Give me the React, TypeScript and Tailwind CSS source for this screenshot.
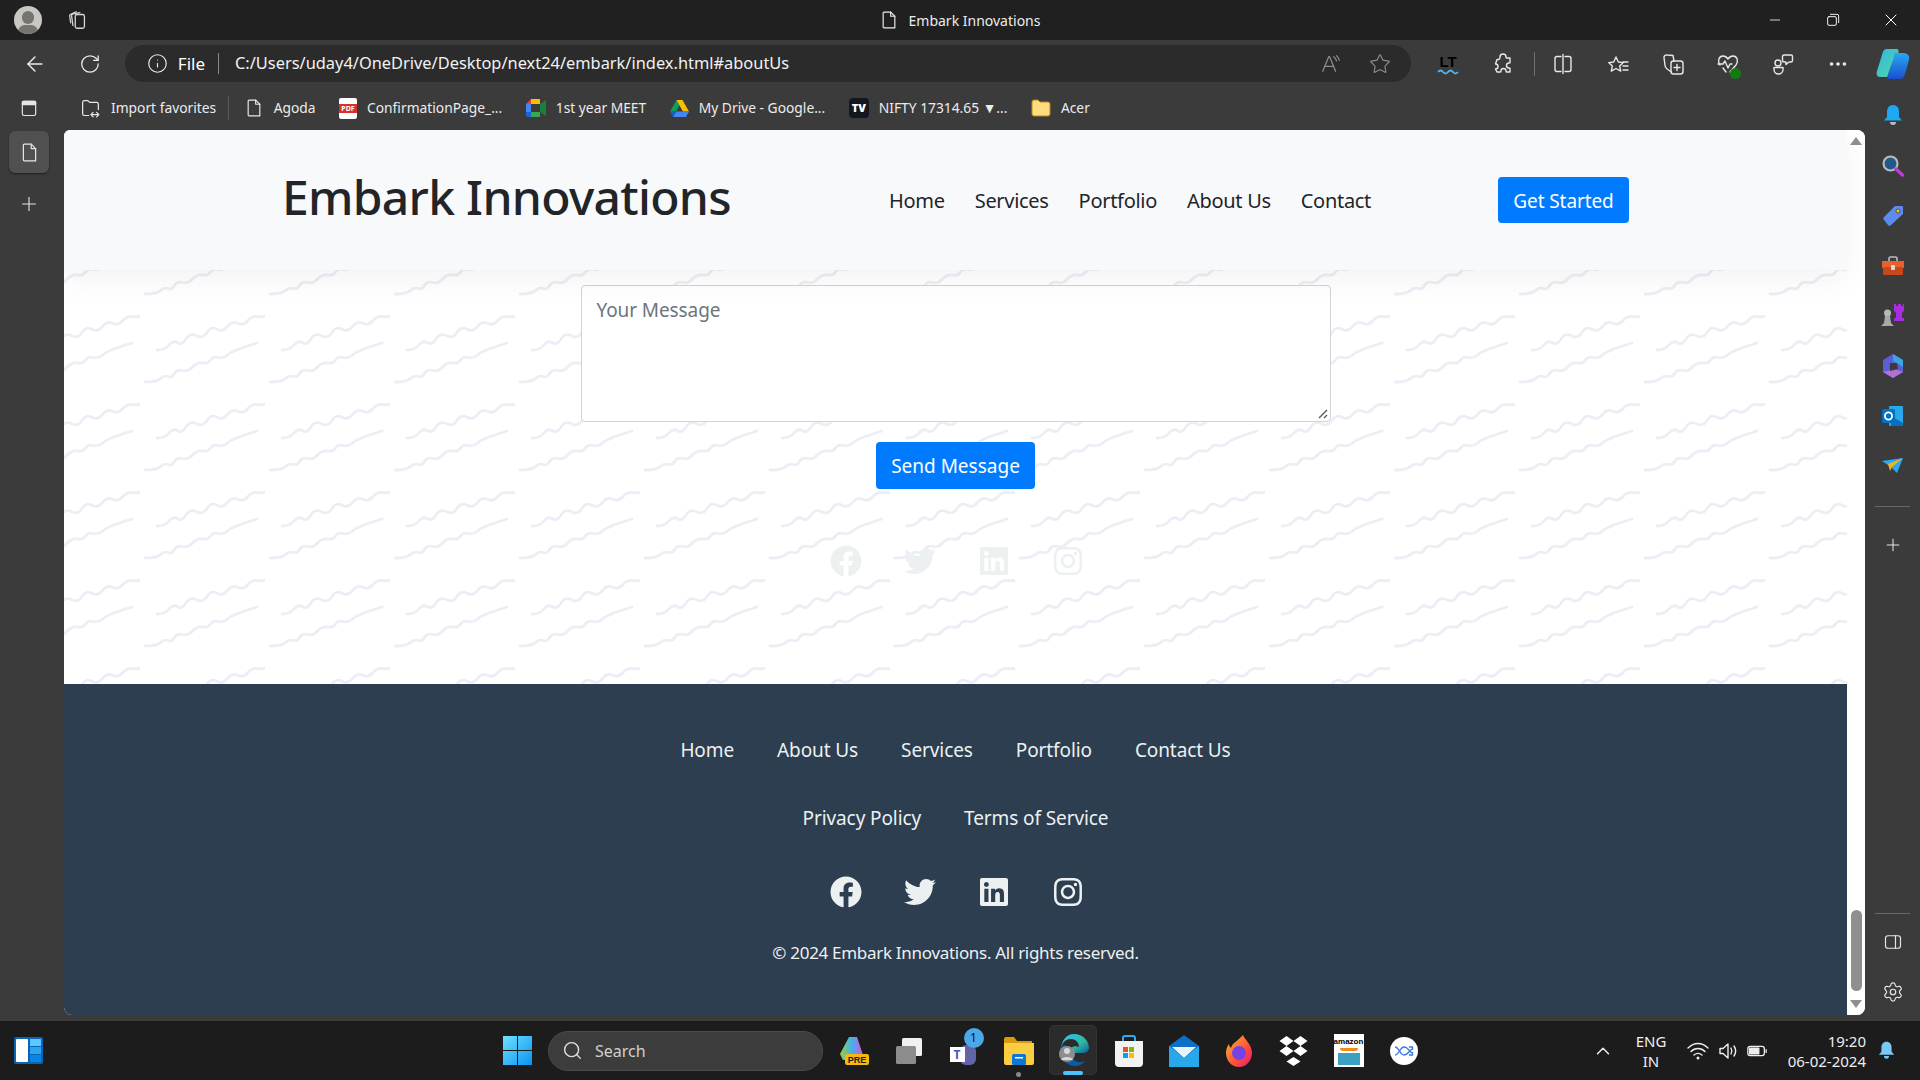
import React from "react";
import { FaFacebook, FaInstagram, FaLinkedin, FaTwitter } from "react-icons/fa";
import { ArrowLeft, ChevronUp, Ellipsis, Info, Minus, Plus, RotateCw, Search, Settings, Star, X } from "lucide-react";

const Stroke = ({ size = 24, children, className = "" }: { size?: number; children: React.ReactNode; className?: string }) => (
  <svg width={size} height={size} viewBox="0 0 24 24" fill="none" stroke="currentColor" strokeWidth={1.4} strokeLinecap="round" strokeLinejoin="round" className={className}>
    {children}
  </svg>
);

const PageIcon = ({ size = 22 }: { size?: number }) => (
  <Stroke size={size}>
    <path d="M6 2.500h8l5 5v14H6a1 1 0 0 1-1-1v-17a1 1 0 0 1 1-1z" />
    <path d="M14 2.500v5h5" />
  </Stroke>
);

// smooth line through the points of one squiggle
const smooth = (pts: number[][]) => {
  let d = `M${pts[0][0]} ${pts[0][1]}`;
  for (let i = 1; i < pts.length - 1; i++) {
    const mx = (pts[i][0] + pts[i + 1][0]) / 2;
    const my = (pts[i][1] + pts[i + 1][1]) / 2;
    d += `Q${pts[i][0]} ${pts[i][1]} ${mx} ${my}`;
  }
  const last = pts[pts.length - 1];
  return d + `L${last[0]} ${last[1]}`;
};

const wave1 = [[17, 45], [25, 45], [33, 35], [42, 40.5], [50, 27.5], [63, 34], [71, 21], [83, 27.5], [92, 15.5], [103, 21], [112, 11], [122, 12], [128, 11]];
const wave2 = [[5, 77], [17, 77], [24, 70], [32, 73], [37, 64], [48, 67], [57, 57], [68, 59], [73, 51], [83, 54], [92, 46], [117, 38]];

const Wave = () => (
  <svg className="absolute inset-0 w-full h-full" xmlns="http://www.w3.org/2000/svg">
    <defs>
      <pattern id="waves" width="125" height="88" patternUnits="userSpaceOnUse" patternTransform="translate(76 35)">
        <path d={smooth(wave1)} fill="none" stroke="#eeedf5" strokeWidth="2.800" strokeLinecap="round" />
        <path d={smooth(wave2)} fill="none" stroke="#eeedf5" strokeWidth="2.800" strokeLinecap="round" />
      </pattern>
    </defs>
    <rect width="100%" height="100%" fill="url(#waves)" />
  </svg>
);

const SocialIcons = ({ color }: { color: string }) => (
  <div className={`flex items-center gap-[42px] ml-[3px] text-[32px] ${color}`}>
    <FaFacebook />
    <FaTwitter />
    <FaLinkedin />
    <FaInstagram />
  </div>
);

const TitleBar = () => (
  <div className="h-[40px] bg-[#202020] flex items-center text-white shrink-0">
    <div className="ml-[14px] w-[28px] h-[28px] rounded-full bg-[#c9c7c4] overflow-hidden relative">
      <div className="absolute left-[8px] top-[5px] w-[12px] h-[13px] rounded-full bg-[#77736f]" />
      <div className="absolute left-[4px] top-[19px] w-[20px] h-[14px] rounded-full bg-[#77736f]" />
    </div>
    <div className="ml-[25px] text-[#d8d8d8]">
      <Stroke size={22}>
        <rect x="9" y="6" width="10" height="15" rx="2" />
        <path d="M6.500 18 5 7.500a2 2 0 0 1 1.700-2.200L14 4" />
        <path d="M4 15 3 8a2 2 0 0 1 1.500-2.500L10 3" />
      </Stroke>
    </div>
    <div className="flex-1 flex items-center justify-center gap-[10px] text-[14px] text-[#ececec] pl-[84px]">
      <PageIcon size={20} />
      <span>Embark Innovations</span>
    </div>
    <div className="flex items-center">
      <div className="w-[58px] flex justify-center"><Minus size={16} strokeWidth={1.2} /></div>
      <div className="w-[58px] flex justify-center">
        <Stroke size={16}>
          <rect x="4" y="7" width="13" height="13" rx="2" />
          <path d="M8 3.500h10a2.500 2.500 0 0 1 2.500 2.500v10" />
        </Stroke>
      </div>
      <div className="w-[58px] flex justify-center"><X size={20} strokeWidth={1.2} /></div>
    </div>
  </div>
);

const ToolCell = ({ children }: { children: React.ReactNode }) => (
  <div className="w-[55px] flex justify-center items-center text-[#e8e8e8]">{children}</div>
);

const Toolbar = () => (
  <div className="h-[46px] bg-[#3b3b3b] flex items-center text-white shrink-0 pt-[1px]">
    <ArrowLeft size={24} strokeWidth={1.4} className="ml-[23px] text-[#ececec]" />
    <RotateCw size={22} strokeWidth={1.4} className="ml-[32px] text-[#ececec]" />
    <div className="ml-[24px] w-[1291px] h-[37px] rounded-full bg-[#2b2b2b] flex items-center">
      <Info size={21} strokeWidth={1.3} className="ml-[22px] text-[#eee]" />
      <span className="ml-[10px] text-[17px]">File</span>
      <div className="ml-[13px] w-px h-[21px] bg-[#8a8a8a]" />
      <span className="ml-[16px] text-[16.4px] text-[#f2f2f2] flex-1">C:/Users/uday4/OneDrive/Desktop/next24/embark/index.html#aboutUs</span>
      <div className="text-[#8b8b8b] mr-[27px]">
        <Stroke size={22}>
          <path d="M3 20 9.500 4h1L17 20M5.500 14.500h9.500" />
          <path d="M15 4c1.500 1 2.500 2.500 3 4.500M18 3c1.500 1 2.500 3 3 5" />
        </Stroke>
      </div>
      <Star size={22} strokeWidth={1.3} className="text-[#8b8b8b] mr-[20px]" />
    </div>
    <div className="ml-[9px] flex items-center">
      <ToolCell>
        <svg width="24" height="24" viewBox="0 0 24 24">
          <text x="12" y="15" textAnchor="middle" fontSize="15" fontWeight="700" fill="#000" fontFamily="Liberation Sans, sans-serif">LT</text>
          <path d="M2 20q2.500-3 5 0t5 0 5 0 5 0" fill="none" stroke="#5ab4f5" strokeWidth="1.800" />
        </svg>
      </ToolCell>
      <ToolCell>
        <Stroke size={24}>
          <path d="M9 5a3 3 0 0 1 6 0c0 .6 0 1 .5 1H19v4.500c0 .5-.6.500-1 .5a2.500 2.500 0 0 0 0 5c.5 0 1 0 1 .5V20h-3.500c-.5 0-.5-.6-.5-1a2.500 2.500 0 0 0-5 0c0 .4 0 1-.5 1H6l-1.500-3c1.500 0 2.500-1 2.500-2.500S6 12 4.500 12L6 7.500c1 0 3 .500 3-2.500z" />
        </Stroke>
      </ToolCell>
      <div className="ml-[4px] w-px h-[24px] bg-[#707070]" />
      <ToolCell>
        <Stroke size={24}>
          <path d="M10 4.500H6a2 2 0 0 0-2 2v11a2 2 0 0 0 2 2h4M14 4.500h4a2 2 0 0 1 2 2v11a2 2 0 0 1-2 2h-4M12 2.500v19" />
        </Stroke>
      </ToolCell>
      <ToolCell>
        <Stroke size={24}>
          <path d="m10 3 2.300 5 5 .6-3.600 3.500 1 5-4.700-2.600-4.700 2.600 1-5L2.700 8.600l5-.6z" transform="translate(0 2)" />
          <path d="M17 10h5M17 14h5M17 18h5" />
        </Stroke>
      </ToolCell>
      <ToolCell>
        <Stroke size={24}>
          <rect x="10" y="9" width="12" height="13" rx="2.500" />
          <path d="M16 12.500v6M13 15.500h6" />
          <path d="M13 9 12 3.500 6 3a2.500 2.500 0 0 0-3 2.500l1 8c.3 2 2 4 6 6" />
        </Stroke>
      </ToolCell>
      <ToolCell>
        <div className="relative">
          <Stroke size={24}>
            <path d="M4 13C1 9 3 4 7 4c2 0 4 1.500 5 3 1-1.500 3-3 5-3 4 0 6 5 3 9l-6 7" />
            <path d="M2 12h5l2-3 3 7 2-4h2" />
            <path d="m7 16 3 4" />
          </Stroke>
          <div className="absolute right-[-1px] bottom-[-3px] w-[11px] h-[11px] rounded-full bg-[#107c10]" />
        </div>
      </ToolCell>
      <ToolCell>
        <Stroke size={24}>
          <circle cx="7" cy="11" r="3" />
          <path d="M13 3h7a1.500 1.500 0 0 1 1.500 1.500v4a1.500 1.500 0 0 1-1.500 1.500h-2l-3 2.500V10h-2a1.500 1.500 0 0 1-1.500-1.500v-4A1.500 1.500 0 0 1 13 3z" />
          <path d="M3 15.500h9v2a4.500 4.500 0 0 1-9 0z" />
        </Stroke>
      </ToolCell>
      <ToolCell><Ellipsis size={22} /></ToolCell>
      <ToolCell>
        <svg width="34" height="34" viewBox="0 0 34 34">
          <defs>
            <linearGradient id="cpA" x1="0" y1="0" x2="1" y2="1"><stop offset="0" stopColor="#2fb7e6" /><stop offset="1" stopColor="#56d89a" /></linearGradient>
            <linearGradient id="cpB" x1="0" y1="0" x2="0" y2="1"><stop offset="0" stopColor="#2aa8f0" /><stop offset="1" stopColor="#1a4fd0" /></linearGradient>
          </defs>
          <path d="M11 2h9c3 0 3 2 2 5l-7 20c-1 2-2 3-5 3H4c-3 0-4-3-3-6L6 8c1-4 2-6 5-6z" fill="url(#cpA)" />
          <path d="M18 6h9c5 0 7 3 6 7l-4 14c-1 4-3 5-6 5h-9c-3 0-3-2-2-5l6-17c1-3 0-4 0-4z" fill="url(#cpB)" />
        </svg>
      </ToolCell>
    </div>
  </div>
);

const Bookmark = ({ icon, label }: { icon: React.ReactNode; label: string }) => (
  <div className="flex items-center gap-[10px]">
    {icon}
    <span className="text-[13.8px] text-[#ececec] whitespace-nowrap">{label}</span>
  </div>
);

const Bookmarks = () => (
  <div className="h-[44px] flex items-center pl-[16px] gap-[23.5px] shrink-0 text-[#e8e8e8]">
    <div className="flex items-center gap-[21px]">
      <Bookmark
        label="Import favorites"
        icon={
          <Stroke size={21}>
            <path d="M10 20H5a2 2 0 0 1-2-2V5a2 2 0 0 1 2-2h4l2 2h8a2 2 0 0 1 2 2v6" />
            <path d="M13 19h8M15 16.500 12.500 19l2.500 2.500M19 16.500l2.500 2.500-2.500 2.500" />
          </Stroke>
        }
      />
      <div className="w-px h-[24px] bg-[#5a5a5a] -mx-[9px]" />
    </div>
    <Bookmark label="Agoda" icon={<PageIcon size={20} />} />
    <Bookmark
      label="ConfirmationPage_..."
      icon={
        <div className="w-[18px] h-[21px] bg-white rounded-[2px] flex items-center justify-center relative">
          <div className="w-[18px] h-[9px] bg-[#d9302c] text-white text-[7px] font-bold leading-[9px] text-center">PDF</div>
        </div>
      }
    />
    <Bookmark
      label="1st year MEET"
      icon={
        <svg width="20" height="18" viewBox="0 0 20 18">
          <path d="M0 5 5 0v5z" fill="#ea4335" />
          <path d="M5 0h9v5H5z" fill="#fbbc04" />
          <path d="M0 5h5v8H0z" fill="#4285f4" />
          <path d="M0 13h5v5H2a2 2 0 0 1-2-2z" fill="#1967d2" />
          <path d="M5 13h9v5H5z" fill="#34a853" />
          <path d="M14 5v8l6 4V1z" fill="#188038" />
        </svg>
      }
    />
    <Bookmark
      label="My Drive - Google..."
      icon={
        <svg width="19" height="17" viewBox="0 0 19 17">
          <path d="M6.500 0h6L6 11.500H0z" fill="#0f9d58" />
          <path d="M12.500 0 19 11.500h-6L6.500 0z" fill="#fbbc04" />
          <path d="M3 17 6 11.500h13L16 17z" fill="#4285f4" />
          <path d="M0 11.500h6L3 17z" fill="#0b66c2" />
        </svg>
      }
    />
    <Bookmark
      label="NIFTY 17314.65 ▼..."
      icon={
        <div className="w-[20px] h-[20px] rounded-[4px] bg-[#131722] text-white text-[11px] font-black leading-[20px] text-center">TV</div>
      }
    />
    <Bookmark
      label="Acer"
      icon={
        <svg width="20" height="18" viewBox="0 0 20 18">
          <path d="M1 3a2 2 0 0 1 2-2h4l2 2h8a2 2 0 0 1 2 2v10a2 2 0 0 1-2 2H3a2 2 0 0 1-2-2z" fill="#ffdc7d" stroke="#b58a1e" />
        </svg>
      }
    />
  </div>
);

const SideIcon = ({ children }: { children: React.ReactNode }) => (
  <div className="h-[50px] flex items-center justify-center">{children}</div>
);

const RightSidebar = () => (
  <div className="w-[55px] shrink-0 flex flex-col text-[#e8e8e8] pt-[5px]">
    <SideIcon>
      <svg width="20" height="22" viewBox="0 0 20 22">
        <path d="M10 0c4 0 6 3 6 7v5l3 3.500H1L4 12V7c0-4 2-7 6-7z" fill="#1ea7f2" />
        <path d="M7 17h6c0 2-1 3-3 3s-3-1-3-3z" fill="#bbb" />
      </svg>
    </SideIcon>
    <SideIcon>
      <svg width="22" height="22" viewBox="0 0 22 22">
        <circle cx="8.500" cy="8.500" r="7" fill="#215a8a" stroke="#b9b9b9" strokeWidth="2.200" />
        <path d="m14 14 6.500 6" stroke="#c239d8" strokeWidth="3.400" strokeLinecap="round" />
      </svg>
    </SideIcon>
    <SideIcon>
      <svg width="22" height="22" viewBox="0 0 22 22">
        <path d="M13 1h7a1 1 0 0 1 1 1v7L9 20a2 2 0 0 1-3 0L2 15a2 2 0 0 1 0-3z" fill="#5d8af0" />
        <circle cx="16" cy="6" r="2" fill="#f5c518" stroke="#222" strokeWidth=".6" />
      </svg>
    </SideIcon>
    <SideIcon>
      <svg width="24" height="20" viewBox="0 0 24 20">
        <path d="M8 5V2.500A1.500 1.500 0 0 1 9.500 1h5A1.500 1.500 0 0 1 16 2.500V5" fill="none" stroke="#bbb" strokeWidth="1.600" />
        <rect x="1" y="5" width="22" height="7" fill="#e8602c" />
        <rect x="2" y="11" width="20" height="8" rx="1" fill="#c8481c" />
        <rect x="10" y="9" width="4" height="5" rx="1" fill="#d8d8d8" />
      </svg>
    </SideIcon>
    <SideIcon>
      <svg width="24" height="24" viewBox="0 0 24 24">
        <path d="M13 1h2v2h2V1h3v2h2V1h1v7l-2 2v5h2v3H13v-3h2v-5l-2-2z" fill="#a52fe0" transform="translate(0 -1)" />
        <circle cx="6.500" cy="9" r="3.500" fill="#b8b8b8" />
        <path d="M4 12h5l1 7 3 3H0l3-3z" fill="#a8a8a8" />
      </svg>
    </SideIcon>
    <SideIcon>
      <svg width="22" height="24" viewBox="0 0 22 24">
        <path d="M11 0 21 6v12l-10 6L1 18V6z" fill="#5b5fd6" />
        <path d="M11 0 21 6v7l-6-4-4-2z" fill="#3aa6e0" />
        <path d="M1 18l10 6 10-6-8-3-4 1z" fill="#b070d8" />
        <path d="M8 9l7 0 1 6-8 2z" fill="#3b3b3b" />
      </svg>
    </SideIcon>
    <SideIcon>
      <svg width="22" height="22" viewBox="0 0 22 22">
        <rect x="7" y="1" width="14" height="20" rx="1" fill="#28a8ea" />
        <path d="M9 11 21 18v2a1 1 0 0 1-1 1H9z" fill="#0a6dc2" />
        <rect x="0" y="4" width="13" height="14" rx="1.500" fill="#0072c6" />
        <circle cx="6.500" cy="11" r="3.600" fill="none" stroke="#fff" strokeWidth="1.800" />
      </svg>
    </SideIcon>
    <SideIcon>
      <svg width="22" height="16" viewBox="0 0 22 16">
        <path d="M0 3 21 0 15 15 9 9z" fill="#2ba8f2" />
        <path d="M21 0 6 6l2 7 2-4z" fill="#f5b21c" />
      </svg>
    </SideIcon>
    <div className="mx-[10px] my-[15px] h-px bg-[#686868]" />
    <div className="flex justify-center pt-[13px]"><Plus size={20} strokeWidth={1.2} /></div>
    <div className="flex-1" />
    <div className="mx-[10px] h-px bg-[#686868]" />
    <div className="h-[56px] flex items-center justify-center">
      <Stroke size={20}>
        <rect x="3" y="4.500" width="18" height="15" rx="3" />
        <path d="M15 4.500v15" />
      </Stroke>
    </div>
    <div className="h-[44px] flex items-center justify-center"><Settings size={22} strokeWidth={1.3} /></div>
    <div className="h-[7px]" />
  </div>
);

const LeftSidebar = () => (
  <div className="w-[64px] shrink-0 flex flex-col items-center text-[#e6e6e6]">
    <div className="h-[44px] flex items-center justify-center pr-[6px]">
      <Stroke size={20}>
        <rect x="4" y="4" width="16" height="17" rx="2" />
        <rect x="4" y="4" width="16" height="4" rx="1" fill="currentColor" />
      </Stroke>
    </div>
    <div className="mt-[1px] ml-[-6px] w-[40px] h-[42px] rounded-[6px] bg-[#505050] flex items-center justify-center shadow-[0_1px_2px_rgba(0,0,0,0.5)]">
      <PageIcon size={21} />
    </div>
    <div className="mt-[20px] ml-[-6px]"><Plus size={22} strokeWidth={1.2} /></div>
  </div>
);

const FooterLink = ({ children }: { children: React.ReactNode }) => (
  <a className="text-[19px] tracking-[-0.1px] text-[#ecf0f1] leading-[30px]">{children}</a>
);

const Page = () => (
  <div className="h-[885px] flex bg-white rounded-[8px] rounded-tl-[6px] overflow-hidden">
    <div className="w-[1783px] flex flex-col">
      <div className="relative z-10 h-[140px] shrink-0 bg-[#f8f9fa] shadow-[0_10px_30px_rgba(0,0,0,0.05)] flex items-center">
        <span className="ml-[218px] text-[48px] font-medium tracking-[-0.7px] leading-[60px] text-[#212529] w-[607px] pb-[6px]">Embark Innovations</span>
        <nav className="flex items-center gap-[30px] text-[20px] tracking-[-0.3px] text-[#212529] mt-[2px]">
          <a>Home</a>
          <a>Services</a>
          <a>Portfolio</a>
          <a>About Us</a>
          <a>Contact</a>
        </nav>
        <button className="ml-auto mr-[218px] h-[46px] w-[131px] pt-[2px] rounded-[4px] bg-[#007bff] text-white text-[19px] tracking-[-0.1px]">Get Started</button>
      </div>
      <section className="relative h-[414px] shrink-0 bg-white flex flex-col items-center">
        <Wave />
        <div className="relative mt-[15px] w-[750px] h-[137px] border border-[#ced4da] rounded-[4px] bg-white px-[15px] pt-[10px] text-[19px] tracking-[-0.1px] text-[#6c757d]">
          Your Message
          <svg className="absolute right-[2px] bottom-[2px]" width="10" height="10" viewBox="0 0 10 10">
            <path d="M1 9 9 1M6 9l3-3" stroke="#555" strokeWidth="1.300" />
          </svg>
        </div>
        <button className="relative mt-[20px] w-[159px] h-[47px] pt-[2px] rounded-[4px] bg-[#007bff] text-white text-[19px]">Send Message</button>
        <div className="relative mt-[56px]">
          <SocialIcons color="text-[#ecf0f1]" />
        </div>
      </section>
      <footer className="flex-1 bg-[#2c3e50] text-[#ecf0f1] flex flex-col items-center pt-[51px]">
        <div className="flex gap-[43px]">
          <FooterLink>Home</FooterLink>
          <FooterLink>About Us</FooterLink>
          <FooterLink>Services</FooterLink>
          <FooterLink>Portfolio</FooterLink>
          <FooterLink>Contact Us</FooterLink>
        </div>
        <div className="flex gap-[43px] mt-[38px]">
          <FooterLink>Privacy Policy</FooterLink>
          <FooterLink>Terms of Service</FooterLink>
        </div>
        <div className="mt-[43px]">
          <SocialIcons color="text-[#ecf0f1]" />
        </div>
        <p className="mt-[31px] text-[17px] tracking-[-0.3px] leading-[27px]">© 2024 Embark Innovations. All rights reserved.</p>
      </footer>
    </div>
    <div className="w-[18px] relative bg-white flex flex-col items-center">
      <div className="mt-[7px] w-0 h-0 border-l-[6px] border-r-[6px] border-b-[8px] border-l-transparent border-r-transparent border-b-[#8f8f8f]" />
      <div className="mt-[765px] w-[11px] h-[81px] rounded-full bg-[#8f8f8f]" />
      <div className="mt-[9px] w-0 h-0 border-l-[6px] border-r-[6px] border-t-[8px] border-l-transparent border-r-transparent border-t-[#8f8f8f]" />
    </div>
  </div>
);

const TaskCell = ({ children }: { children: React.ReactNode }) => (
  <div className="w-[55px] h-full flex items-center justify-center relative">{children}</div>
);

const Taskbar = () => (
  <div className="h-[59px] bg-[#1c1c1c] flex items-center text-white shrink-0">
    <div className="ml-[14px] w-[29px] h-[27px] rounded-[2px] bg-[#0a64b4] flex gap-[2px] p-[2px]">
      <div className="w-[12px] bg-white rounded-[1px]" />
      <div className="flex-1 flex flex-col gap-[1px]">
        <div className="flex-1 bg-[#5bc8ff]" />
        <div className="h-[7px] bg-[#2aa4f4]" />
        <div className="h-[7px] bg-[#0c84e4]" />
      </div>
    </div>
    <svg className="ml-[460px]" width="29" height="29" viewBox="0 0 29 29">
      <defs>
        <linearGradient id="winG" x1="0" y1="0" x2="1" y2="1"><stop offset="0" stopColor="#6fe0ff" /><stop offset="1" stopColor="#0a94f0" /></linearGradient>
      </defs>
      <path d="M0 0h14v14H0zM15 0h14v14H15zM0 15h14v14H0zM15 15h14v14H15z" fill="url(#winG)" />
    </svg>
    <div className="ml-[16px] w-[275px] h-[40px] rounded-full bg-[#3c3c3c] border border-[#4a4a4a] flex items-center">
      <Search size={21} strokeWidth={1.6} className="ml-[13px] text-[#e0e0e0]" />
      <span className="ml-[12px] text-[16px] text-[#d0d0d0]">Search</span>
    </div>
    <div className="ml-[3px] flex items-center h-full">
      <TaskCell>
        <svg width="30" height="30" viewBox="0 0 30 30">
          <defs>
            <linearGradient id="cpP" x1="0" y1="0" x2="1" y2="0"><stop offset="0" stopColor="#9ccf3c" /><stop offset=".5" stopColor="#3fb3ee" /><stop offset="1" stopColor="#d05ad8" /></linearGradient>
          </defs>
          <path d="M10 1h8l6 18-8 0-3 5H4L1 18z" fill="url(#cpP)" />
          <rect x="6" y="18" width="24" height="11" rx="2" fill="#f5b90c" />
          <text x="18" y="27" textAnchor="middle" fontSize="9" fontWeight="700" fill="#222" fontFamily="Liberation Sans, sans-serif">PRE</text>
        </svg>
      </TaskCell>
      <TaskCell>
        <svg width="30" height="28" viewBox="0 0 30 28">
          <rect x="8" y="1" width="20" height="18" rx="1.500" fill="#f0f0f0" />
          <rect x="2" y="9" width="20" height="18" rx="1.500" fill="#8c8c8c" />
        </svg>
      </TaskCell>
      <TaskCell>
        <div className="relative w-[28px] h-[28px]">
          <div className="absolute left-[10px] top-[8px] w-[16px] h-[20px] rounded-[6px] bg-[#6264a7]" />
          <div className="absolute left-0 top-[10px] w-[15px] h-[15px] bg-white text-[#4b53bc] text-[12px] font-bold leading-[15px] text-center">T</div>
          <div className="absolute left-[14px] top-[-9px] w-[20px] h-[20px] rounded-full bg-[#4aa8e8] text-[#111] text-[12px] leading-[20px] text-center">1</div>
        </div>
      </TaskCell>
      <TaskCell>
        <svg width="30" height="28" viewBox="0 0 30 28">
          <path d="M0 2a2 2 0 0 1 2-2h8l3 4h15v6H0z" fill="#d99a0f" />
          <path d="M0 6h30v20a2 2 0 0 1-2 2H2a2 2 0 0 1-2-2z" fill="#fbcd42" />
          <rect x="8" y="17" width="14" height="11" rx="1.500" fill="#0a78d4" />
          <rect x="11" y="20" width="8" height="1.500" fill="#fff" />
        </svg>
        <div className="absolute bottom-[3px] left-[25px] w-[5px] h-[5px] rounded-full bg-[#8a8a8a]" />
      </TaskCell>
      <TaskCell>
        <div className="absolute left-[3px] top-[4px] w-[48px] h-[50px] rounded-[5px] bg-[#2b2b2b] border border-[#333]" />
        <svg className="relative mb-[2px]" width="32" height="34" viewBox="0 0 32 34">
          <defs>
            <linearGradient id="edgeG" x1="0" y1="0" x2="1" y2="1"><stop offset="0" stopColor="#35c1f1" /><stop offset=".6" stopColor="#2fb9a0" /><stop offset="1" stopColor="#0c59a4" /></linearGradient>
          </defs>
          <path d="M16 1c9 0 15 7 15 14 0 3-3 5-7 5H11c0-5 5-8 10-6 0-4-3-8-8-8C6 6 3 12 3 17c0-9 5-16 13-16z" fill="url(#edgeG)" />
          <path d="M2 16c0 10 7 17 15 17 4 0 8-2 10-5-6 3-14 0-15-8C12 12 4 9 2 16z" fill="#0c59a4" />
          <circle cx="9" cy="21" r="8" fill="#8e8e8e" />
          <circle cx="9" cy="18" r="3" fill="#d8d8d8" />
          <path d="M3 27c1-4 11-4 12 0z" fill="#d8d8d8" />
        </svg>
        <div className="absolute bottom-[5px] left-[17px] w-[20px] h-[4px] rounded-full bg-[#4cc2ff]" />
      </TaskCell>
      <TaskCell>
        <svg width="30" height="32" viewBox="0 0 30 32">
          <path d="M9 6V3a2 2 0 0 1 2-2h8a2 2 0 0 1 2 2v3" fill="none" stroke="#30a9ef" strokeWidth="2" />
          <path d="M1 6h28v22a4 4 0 0 1-4 4H5a4 4 0 0 1-4-4z" fill="#f2f2f2" />
          <path d="M9 12h5v5H9z" fill="#f25022" /><path d="M15 12h5v5h-5z" fill="#7fba00" />
          <path d="M9 18h5v5H9z" fill="#00a4ef" /><path d="M15 18h5v5h-5z" fill="#ffb900" />
        </svg>
      </TaskCell>
      <TaskCell>
        <svg width="30" height="32" viewBox="0 0 30 32">
          <path d="M15 0 30 11v21H0V11z" fill="#0f6fc6" />
          <path d="M3 12h24L15 23z" fill="#e8f4fb" />
          <path d="M0 11 15 23 30 11v21H0z" fill="#28a8ea" />
        </svg>
      </TaskCell>
      <TaskCell>
        <svg width="28" height="32" viewBox="0 0 28 32">
          <defs>
            <linearGradient id="ffG" x1="0" y1="0" x2="1" y2="1"><stop offset="0" stopColor="#ffbd2f" /><stop offset=".6" stopColor="#ff4f38" /><stop offset="1" stopColor="#e31587" /></linearGradient>
          </defs>
          <path d="M18 0c1 4 9 9 9 18 0 8-6 14-13 14S1 26 1 18c0-4 2-8 3-9 0 2 1 3 2 4 1-5 7-7 12-13z" fill="url(#ffG)" />
          <circle cx="14" cy="18" r="7" fill="#7542e5" />
        </svg>
      </TaskCell>
      <TaskCell>
        <svg width="29" height="30" viewBox="0 0 29 30" fill="#fff">
          <path d="M7.500 0l7 5-7 5-7-5zM21.500 0l7 5-7 5-7-5zM7.500 10l7 5-7 5-7-5zM21.500 10l7 5-7 5-7-5zM14.500 21l7 4.500-7 4.500-7-4.500z" />
        </svg>
      </TaskCell>
      <TaskCell>
        <div className="w-[30px] h-[33px] bg-white flex flex-col items-center overflow-hidden">
          <span className="text-[8px] text-black font-bold leading-[12px] mt-[2px]" style={{ fontFamily: "'Liberation Sans', sans-serif" }}>amazon</span>
          <div className="w-[18px] h-[3px] rounded-b-full bg-[#f08c1e]" />
          <div className="mt-[2px] w-[22px] h-[12px] bg-[#3ea0c0]" />
        </div>
      </TaskCell>
      <TaskCell>
        <div className="w-[28px] h-[28px] rounded-full bg-white flex items-center justify-center">
          <svg width="20" height="14" viewBox="0 0 20 14" fill="none" stroke="#3a78e0" strokeWidth="1.300">
            <path d="M1 3c4 0 5 8 9 8s4-3 8-6M1 11c4 0 5-8 9-8s4 3 8 6" />
            <path d="M15 3h3.500v3M15 11h3.500V8" />
          </svg>
        </div>
      </TaskCell>
    </div>
    <ChevronUp size={22} strokeWidth={1.6} className="ml-[161px] text-[#eee]" />
    <div className="ml-[19px] w-[36px] flex flex-col items-center text-[15px] leading-[20px] text-[#eee]">
      <span>ENG</span>
      <span>IN</span>
    </div>
    <div className="ml-[17px] flex items-center gap-[6px] text-[#eee]">
      <Stroke size={24}>
        <path d="M2 9c6-6 14-6 20 0M5 12.500c4-4 10-4 14 0M8 16c2.500-2 5.500-2 8 0" />
        <circle cx="12" cy="19" r=".8" />
      </Stroke>
      <Stroke size={24}>
        <path d="M4 9.500v5h3l5 4.500V5L7 9.500z" />
        <path d="M15 9c1 1.800 1 4.200 0 6M18 7c2 3 2 7 0 10" />
      </Stroke>
      <Stroke size={22}>
        <rect x="2" y="7" width="18" height="10" rx="2.500" />
        <rect x="4" y="9" width="10" height="6" fill="currentColor" />
        <path d="M22 10.500v3" />
      </Stroke>
    </div>
    <div className="ml-auto flex flex-col items-end text-[15px] leading-[20px] text-[#eee]">
      <span>19:20</span>
      <span>06-02-2024</span>
    </div>
    <svg className="ml-[12px] mr-[25px]" width="17" height="20" viewBox="0 0 20 22">
      <path d="M10 0c4 0 6 3 6 7v5l3 3.500H1L4 12V7c0-4 2-7 6-7z" fill="#79c8f5" />
      <path d="M7 17h6c0 2-1 3-3 3s-3-1-3-3z" fill="#79c8f5" />
    </svg>
  </div>
);

export default function App() {
  return (
    <div className="w-[1920px] h-[1080px] overflow-hidden flex flex-col bg-[#3b3b3b]" style={{ fontFamily: "'Noto Sans', sans-serif" }}>
      <TitleBar />
      <Toolbar />
      <div className="flex-1 flex min-h-0">
        <LeftSidebar />
        <div className="w-[1801px] shrink-0 flex flex-col">
          <Bookmarks />
          <Page />
        </div>
        <RightSidebar />
      </div>
      <Taskbar />
    </div>
  );
}
